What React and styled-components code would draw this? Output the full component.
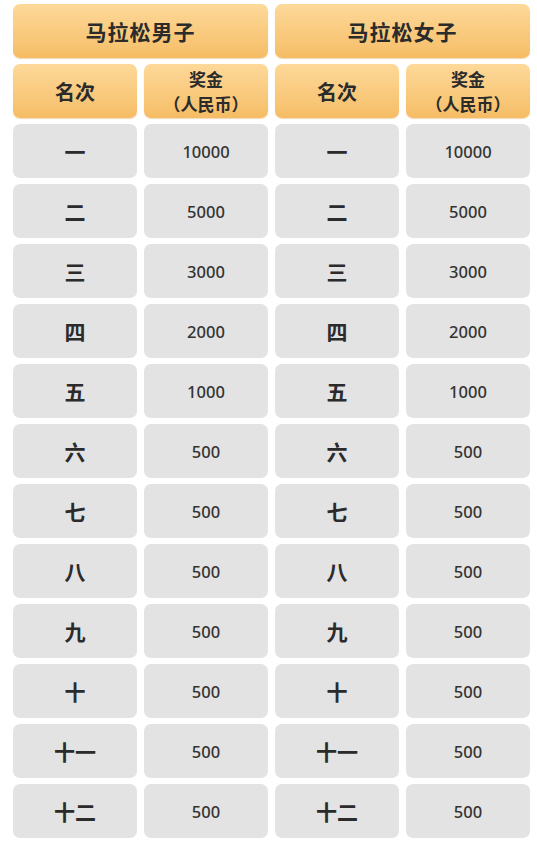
import { Fragment } from "react";
import styled, { createGlobalStyle } from "styled-components";

const GlobalStyle = createGlobalStyle`
  body {
    margin: 0;
    background: #ffffff;
    font-family: "Noto Sans CJK SC", "Noto Sans", sans-serif;
  }
`;

const Table = styled.div`
  display: grid;
  grid-template-columns: repeat(4, 124px);
  grid-auto-rows: 54px;
  column-gap: 7px;
  row-gap: 6px;
  padding: 4px 0 0 13px;
`;

const Cell = styled.div`
  display: flex;
  align-items: center;
  justify-content: center;
  border-radius: 7px;
  color: #2b2b2b;
  text-align: center;
`;

const Title = styled(Cell)`
  grid-column: span 2;
  background: linear-gradient(180deg, #fdd999 0%, #f7c371 80%, #f5bb64 100%);
  box-shadow: 0 1px 1px rgba(214, 150, 60, 0.35);
  font-size: 21px;
  font-weight: 700;
  letter-spacing: 1px;
`;

const Head = styled(Cell)`
  flex-direction: column;
  background: linear-gradient(180deg, #fdd999 0%, #f7c371 80%, #f5bb64 100%);
  box-shadow: 0 1px 1px rgba(214, 150, 60, 0.35);
  font-size: ${(p) => (p.$small ? "17px" : "20px")};
  line-height: 25px;
  font-weight: 700;
`;

const Rank = styled(Cell)`
  background: #e3e3e3;
  font-size: 21px;
  font-weight: 700;
`;

const Prize = styled(Cell)`
  background: #e3e3e3;
  font-family: "Noto Sans", "Open Sans", sans-serif;
  font-size: 16.5px;
  font-weight: 500;
  color: #333333;
`;

const rows = [
  ["一", "10000"],
  ["二", "5000"],
  ["三", "3000"],
  ["四", "2000"],
  ["五", "1000"],
  ["六", "500"],
  ["七", "500"],
  ["八", "500"],
  ["九", "500"],
  ["十", "500"],
  ["十一", "500"],
  ["十二", "500"],
];

const HeaderPair = () => (
  <>
    <Head>名次</Head>
    <Head $small>
      <span>奖金</span>
      <span>（人民币）</span>
    </Head>
  </>
);

export default function App() {
  return (
    <>
      <GlobalStyle />
      <Table>
        <Title>马拉松男子</Title>
        <Title>马拉松女子</Title>
        <HeaderPair />
        <HeaderPair />
        {rows.map(([rank, prize]) => (
          <Fragment key={rank}>
            <Rank>{rank}</Rank>
            <Prize>{prize}</Prize>
            <Rank>{rank}</Rank>
            <Prize>{prize}</Prize>
          </Fragment>
        ))}
      </Table>
    </>
  );
}
